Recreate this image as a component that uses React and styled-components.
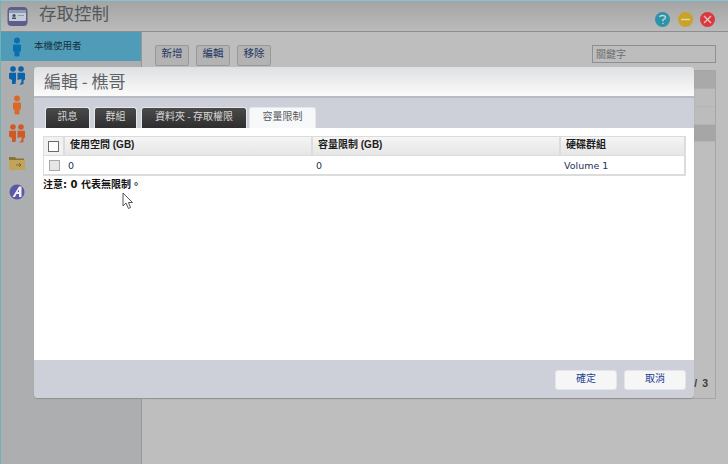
import React from "react";
import styled, { createGlobalStyle } from "styled-components";

const Global = createGlobalStyle`
  html, body { margin: 0; padding: 0; width: 728px; height: 464px; overflow: hidden; }
  body { font-family: "Liberation Sans", "Noto Sans CJK TC", sans-serif; }
  * { box-sizing: border-box; }
`;

const cjk = `"Noto Sans CJK TC", "Liberation Sans", sans-serif`;

const Win = styled.div`
  position: relative; width: 728px; height: 464px; display: flex; flex-direction: column;
  background: #bebebe; border-top: 1px solid #7cc8d8; border-left: 1px solid #6db4b8; overflow: hidden;
`;
const TitleBar = styled.header`
  height: 31px; flex: none; display: flex; align-items: center; padding: 0 13px 0 6px;
  background: linear-gradient(#a4a4a4, #bbbbbb); border-bottom: 1px solid #8e8e8e;
`;
const AppIcon = styled.svg`width: 22px; height: 22px; flex: none;`;
const Title = styled.h1`
  margin: 0 0 0 10px; font: 400 17.5px ${cjk}; color: #55595c; letter-spacing: 0; flex: 1; position: relative; top: -4px;
`;
const Circle = styled.div`
  width: 15px; height: 15px; border-radius: 50%; background: ${p => p.$c}; margin-left: 7.5px;
  display: flex; align-items: center; justify-content: center; color: #c9c9c9;
  font: 700 12px "Liberation Sans", sans-serif; line-height: 1; position: relative; top: 3px;
`;
const Body = styled.div`flex: 1; display: flex; min-height: 0;`;
const Sidebar = styled.nav`
  width: 141px; flex: none; background: #adaeaf; border-right: 1px solid #979797; display: flex; flex-direction: column;
`;
const NavItem = styled.div`
  height: 29.2px; display: flex; align-items: center; padding-left: 8px; flex: none;
  background: ${p => p.$active ? "#4f9bb8" : "transparent"};
  &:first-child { height: 29px; }
`;
const NavLabel = styled.span`margin-left: 9px; font: 400 9.5px ${cjk}; color: #16323f; position: relative; top: -2px;`;
const Main = styled.main`flex: 1; padding: 13px 12px 0 13px; display: flex; flex-direction: column;`;
const Toolbar = styled.div`display: flex; gap: 7px; height: 25px; flex: none; align-items: flex-start;`;
const ToolBtn = styled.div`
  width: 34px; height: 21px; border: 1px solid #999; border-radius: 2px; background: #b3b3b3;
  font: 400 10.5px/13px ${cjk}; color: #1e3560; text-align: center;
`;
const Search = styled.div`
  margin-left: auto; width: 124px; height: 18px; border: 1px solid #8b8f96; background: #bdbdbd;
  font: 400 10px/16px ${cjk}; color: #6f6f6f; padding-left: 3px;
`;
const Grid = styled.div`
  height: 329px; border: 1px solid #a6a6a6; display: flex; flex-direction: column; position: relative;
`;
const GridHead = styled.div`height: 18px; background: #a9a9a9; border-bottom: 1px solid #b0b0b0;`;
const GridRow = styled.div`height: ${p => p.$h}px; background: ${p => p.$sel ? "#a6a6a6" : "#bcbcbc"}; border-bottom: 1px solid #b4b4b4;`;
const Pager = styled.div`position: absolute; right: 7px; bottom: 9px; font: 700 10.5px "Liberation Sans", sans-serif; color: #3c3c3c; word-spacing: 2px;`;

const Dialog = styled.section`
  position: absolute; left: 33px; top: 66px; width: 660px; height: 331px; border-radius: 4px;
  display: flex; flex-direction: column; overflow: hidden; box-shadow: 0 1px 1px #8f8f8f; background: #cdd0d9;
`;
const DlgHead = styled.div`
  height: 31px; flex: none; background: linear-gradient(#dfe0e2, #fbfbfb); border-bottom: 2px solid #b8bbc3;
  padding-left: 10px; display: flex; align-items: center;
`;
const DlgTitle = styled.h2`margin: 0; font: 400 17px ${cjk}; color: #5f6266; position: relative; top: -1px;`;
const TabBar = styled.div`height: 30px; flex: none; display: flex; align-items: flex-end; background: #cdd0d9; padding-left: 11px;`;
const Tab = styled.div`
  height: 21px; width: ${p => p.$w}px; margin-right: ${p => p.$m}px; border-radius: 3px 3px 0 0; text-align: center;
  font: 400 10px/16px ${cjk};
  background: ${p => p.$on ? "#f7f8f9" : "linear-gradient(#4a4a4a, #2e2e2e)"};
  color: ${p => p.$on ? "#55585c" : "#d8d8d8"};
  border: 1px solid #e6e7ea; border-bottom: 0;
`;
const Content = styled.div`flex: 1; background: #fff; padding: 8px 8px 0 9px; min-height: 0;`;
const Table = styled.div`width: 643px; border: 1px solid #dcdcdc; border-width: 1px 2px 2px 1px;`;
const Row = styled.div`
  display: grid; grid-template-columns: 21px 248px 248px 1fr; height: ${p => p.$h}px; align-items: center;
`;
const HeadRow = styled(Row)`background: linear-gradient(#f5f5f5, #e6e6e6); border-bottom: 1px solid #dcdcdc;`;
const HeadCell = styled.div`
  height: 100%; border-right: 2px solid #dcdcdc; padding-left: 5px;
  font: 700 10px/16px "Liberation Sans", "Noto Sans CJK TC", sans-serif; color: #1c1c1c; white-space: nowrap;
  &:last-child { border-right: 0; }
`;
const BoxCell = styled.div`height: 100%; display: flex; align-items: center; justify-content: center; background: ${p => p.$head ? "#f1f1f1" : "transparent"}; border-right: ${p => p.$head ? "2px solid #dcdcdc" : "0"};`;
const Check = styled.div`
  width: ${p => p.$s}px; height: ${p => p.$s}px; border: 1px solid ${p => p.$head ? "#6a6a6a" : "#a9a9a9"};
  background: ${p => p.$head ? "#fff" : "#e6e6e6"};
`;
const Cell = styled.div`padding-left: 3px; font: 400 9.5px "DejaVu Sans", sans-serif; color: #1f3258;`;
const Note = styled.p`margin: 2px 0 0 0; font: 700 10px/14px "DejaVu Sans", "Noto Sans CJK TC", sans-serif; color: #111;`;
const Footer = styled.div`height: 38px; flex: none; background: #cdd0d9; display: flex; justify-content: flex-end; gap: 7px; padding: 10px 8px 0 0;`;
const DlgBtn = styled.div`
  width: 62px; height: 20px; border-radius: 3px; background: #f6f6f7; border: 1px solid #e4e5e9;
  font: 400 10px/14px ${cjk}; color: #1d3f94; text-align: center;
`;
const Cursor = styled.svg`position: absolute; left: 121px; top: 191px; width: 13px; height: 18px;`;

const Person = ({ c }) => (
  <svg width="16" height="20" viewBox="0 0 16 20">
    <circle cx="8" cy="3.5" r="3" fill={c} />
    <path d="M4 8.5 Q4 7.5 5 7.5 H11 Q12 7.5 12 8.5 V14 L10.5 15 V19 Q8 20 5.5 19 V15 L4 14 Z" fill={c} />
  </svg>
);
const People = ({ c }) => (
  <svg width="16" height="20" viewBox="0 0 16 20">
    <circle cx="4" cy="3" r="2.8" fill={c} />
    <circle cx="12" cy="3" r="2.8" fill={c} />
    <path d="M0 8 Q0 6.8 1.2 6.8 H7 V14 L6.5 18 H3 V14 L0 12.5 Z" fill={c} />
    <path d="M8.5 6.8 H15 Q16 6.8 16 8 V13.5 L14.5 14.5 V18 L10.5 19 L12.5 16 V13 L8.5 14 Z" fill={c} />
  </svg>
);

export default function App() {
  return (
    <Win>
      <Global />
      <TitleBar>
        <AppIcon viewBox="0 0 22 22">
          <rect x="0.5" y="2" width="20" height="19" rx="4" fill="#5c5f8e" />
          <rect x="2" y="5" width="17" height="11" rx="1" fill="#c4ccd6" />
          <rect x="2" y="5" width="17" height="3" fill="#8d9cb0" />
          <circle cx="7" cy="10.5" r="1.6" fill="#44506a" />
          <rect x="5" y="12.5" width="4" height="1.5" fill="#44506a" />
          <rect x="11" y="10" width="6" height="1" fill="#8f97a8" />
        </AppIcon>
        <Title>存取控制</Title>
        <Circle $c="#2d93a8"><svg width="11" height="11" viewBox="0 0 11 11"><path d="M2.5 3 Q3 1.5 5.5 1.5 Q8.5 1.5 8.5 3.5 Q8.5 5 6 5.6 V7.5 M6 9 V10" fill="none" stroke="#bfd6da" strokeWidth="1.4" /></svg></Circle>
        <Circle $c="#c9a227"><svg width="11" height="11" viewBox="0 0 11 11"><path d="M1 5.5 H10" stroke="#e4d9a6" strokeWidth="1.4" /></svg></Circle>
        <Circle $c="#d8393f"><svg width="11" height="11" viewBox="0 0 11 11"><path d="M2 2 L9 9 M9 2 L2 9" stroke="#edc2c2" strokeWidth="1.4" /></svg></Circle>
      </TitleBar>
      <Body>
        <Sidebar>
          <NavItem $active><Person c="#0a6fb0" /><NavLabel>本機使用者</NavLabel></NavItem>
          <NavItem><People c="#0a62a8" /></NavItem>
          <NavItem><Person c="#d9692a" /></NavItem>
          <NavItem><People c="#cf5a24" /></NavItem>
          <NavItem>
            <svg width="16" height="14" viewBox="0 0 16 14">
              <path d="M0 1 H6 L7 2.5 H15 V4 H0 Z" fill="#8a7434" />
              <rect x="0" y="4" width="16" height="10" fill="#c2a458" />
              <path d="M7 9 H12 M10 7 L12 9 L10 11" stroke="#7c6a38" fill="none" />
            </svg>
          </NavItem>
          <NavItem>
            <svg width="16" height="16" viewBox="0 0 16 16">
              <circle cx="8" cy="8" r="7.5" fill="#5b58a8" />
              <path d="M3.5 13 L10 2.5 H12.5 L12.5 13 H10 V10 H7.5 L6 13 Z M10 8 V5.5 L8.6 8 Z" fill="#eef0f6" fillRule="evenodd" />
            </svg>
          </NavItem>
        </Sidebar>
        <Main>
          <Toolbar>
            <ToolBtn>新增</ToolBtn>
            <ToolBtn>編輯</ToolBtn>
            <ToolBtn>移除</ToolBtn>
            <Search>關鍵字</Search>
          </Toolbar>
          <Grid>
            <GridHead />
            <GridRow $h={18} />
            <GridRow $h={18} />
            <GridRow $h={17} $sel />
            <Pager>/ 3</Pager>
          </Grid>
        </Main>
      </Body>
      <Dialog>
        <DlgHead><DlgTitle>編輯 - 樵哥</DlgTitle></DlgHead>
        <TabBar>
          <Tab $w={45} $m={4}>訊息</Tab>
          <Tab $w={43} $m={4}>群組</Tab>
          <Tab $w={106} $m={2}>資料夾 - 存取權限</Tab>
          <Tab $w={67} $m={0} $on>容量限制</Tab>
        </TabBar>
        <Content>
          <Table>
            <HeadRow $h={19}>
              <BoxCell $head><Check $s={11} $head /></BoxCell>
              <HeadCell>使用空間 (GB)</HeadCell>
              <HeadCell>容量限制 (GB)</HeadCell>
              <HeadCell>硬碟群組</HeadCell>
            </HeadRow>
            <Row $h={18}>
              <BoxCell><Check $s={11} /></BoxCell>
              <Cell>0</Cell>
              <Cell>0</Cell>
              <Cell>Volume 1</Cell>
            </Row>
          </Table>
          <Note>注意: 0 代表無限制。</Note>
        </Content>
        <Footer>
          <DlgBtn>確定</DlgBtn>
          <DlgBtn>取消</DlgBtn>
        </Footer>
      </Dialog>
      <Cursor viewBox="0 0 13 18">
        <path d="M1 1 V14 L4 11 L6.5 16.5 L8.5 15.5 L6.5 10.5 L10.5 10.5 Z" fill="#fff" stroke="#555" strokeWidth="1" />
      </Cursor>
    </Win>
  );
}
